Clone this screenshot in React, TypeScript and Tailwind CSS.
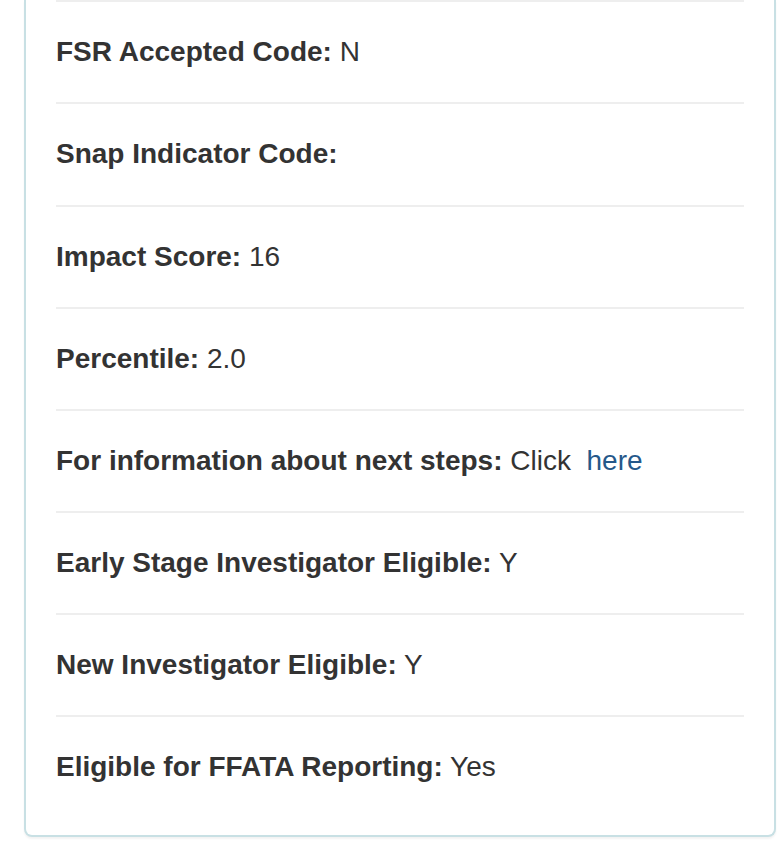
const ROWS: { label: string; value?: string; link?: boolean }[] = [
  { label: "FSR Accepted Code:", value: "N" },
  { label: "Snap Indicator Code:" },
  { label: "Impact Score:", value: "16" },
  { label: "Percentile:", value: "2.0" },
  { label: "For information about next steps:", value: "Click", link: true },
  { label: "Early Stage Investigator Eligible:", value: "Y" },
  { label: "New Investigator Eligible:", value: "Y" },
  { label: "Eligible for FFATA Reporting:", value: "Yes" },
];

export default function App() {
  return (
    <div
      className="min-h-[853px] bg-white text-[#333333]"
      style={{ fontFamily: '"Liberation Sans", Arial, Helvetica, sans-serif' }}
    >
      <div className="ml-[24px] w-[752px] rounded-b-[8px] border-x-2 border-b-2 border-[#c8e0e4] bg-white px-[30px] pb-[18px] shadow-[0_2px_2px_rgba(0,0,0,0.05)]">
        {ROWS.map((row, i) => (
          <div
            key={row.label}
            className={`border-t-2 border-[#eeeeee] pt-[30px] text-[28px] leading-[40px] ${
              i === 1 ? "pb-[31px]" : "pb-[30px]"
            }`}
          >
            <span className="font-bold">{row.label}</span>
            {row.value ? " " + row.value : null}
            {row.link ? (
              <>
                {"\u00a0 "}
                <a href="#" className="text-[#25588a]">
                  here
                </a>
              </>
            ) : null}
          </div>
        ))}
      </div>
    </div>
  );
}
